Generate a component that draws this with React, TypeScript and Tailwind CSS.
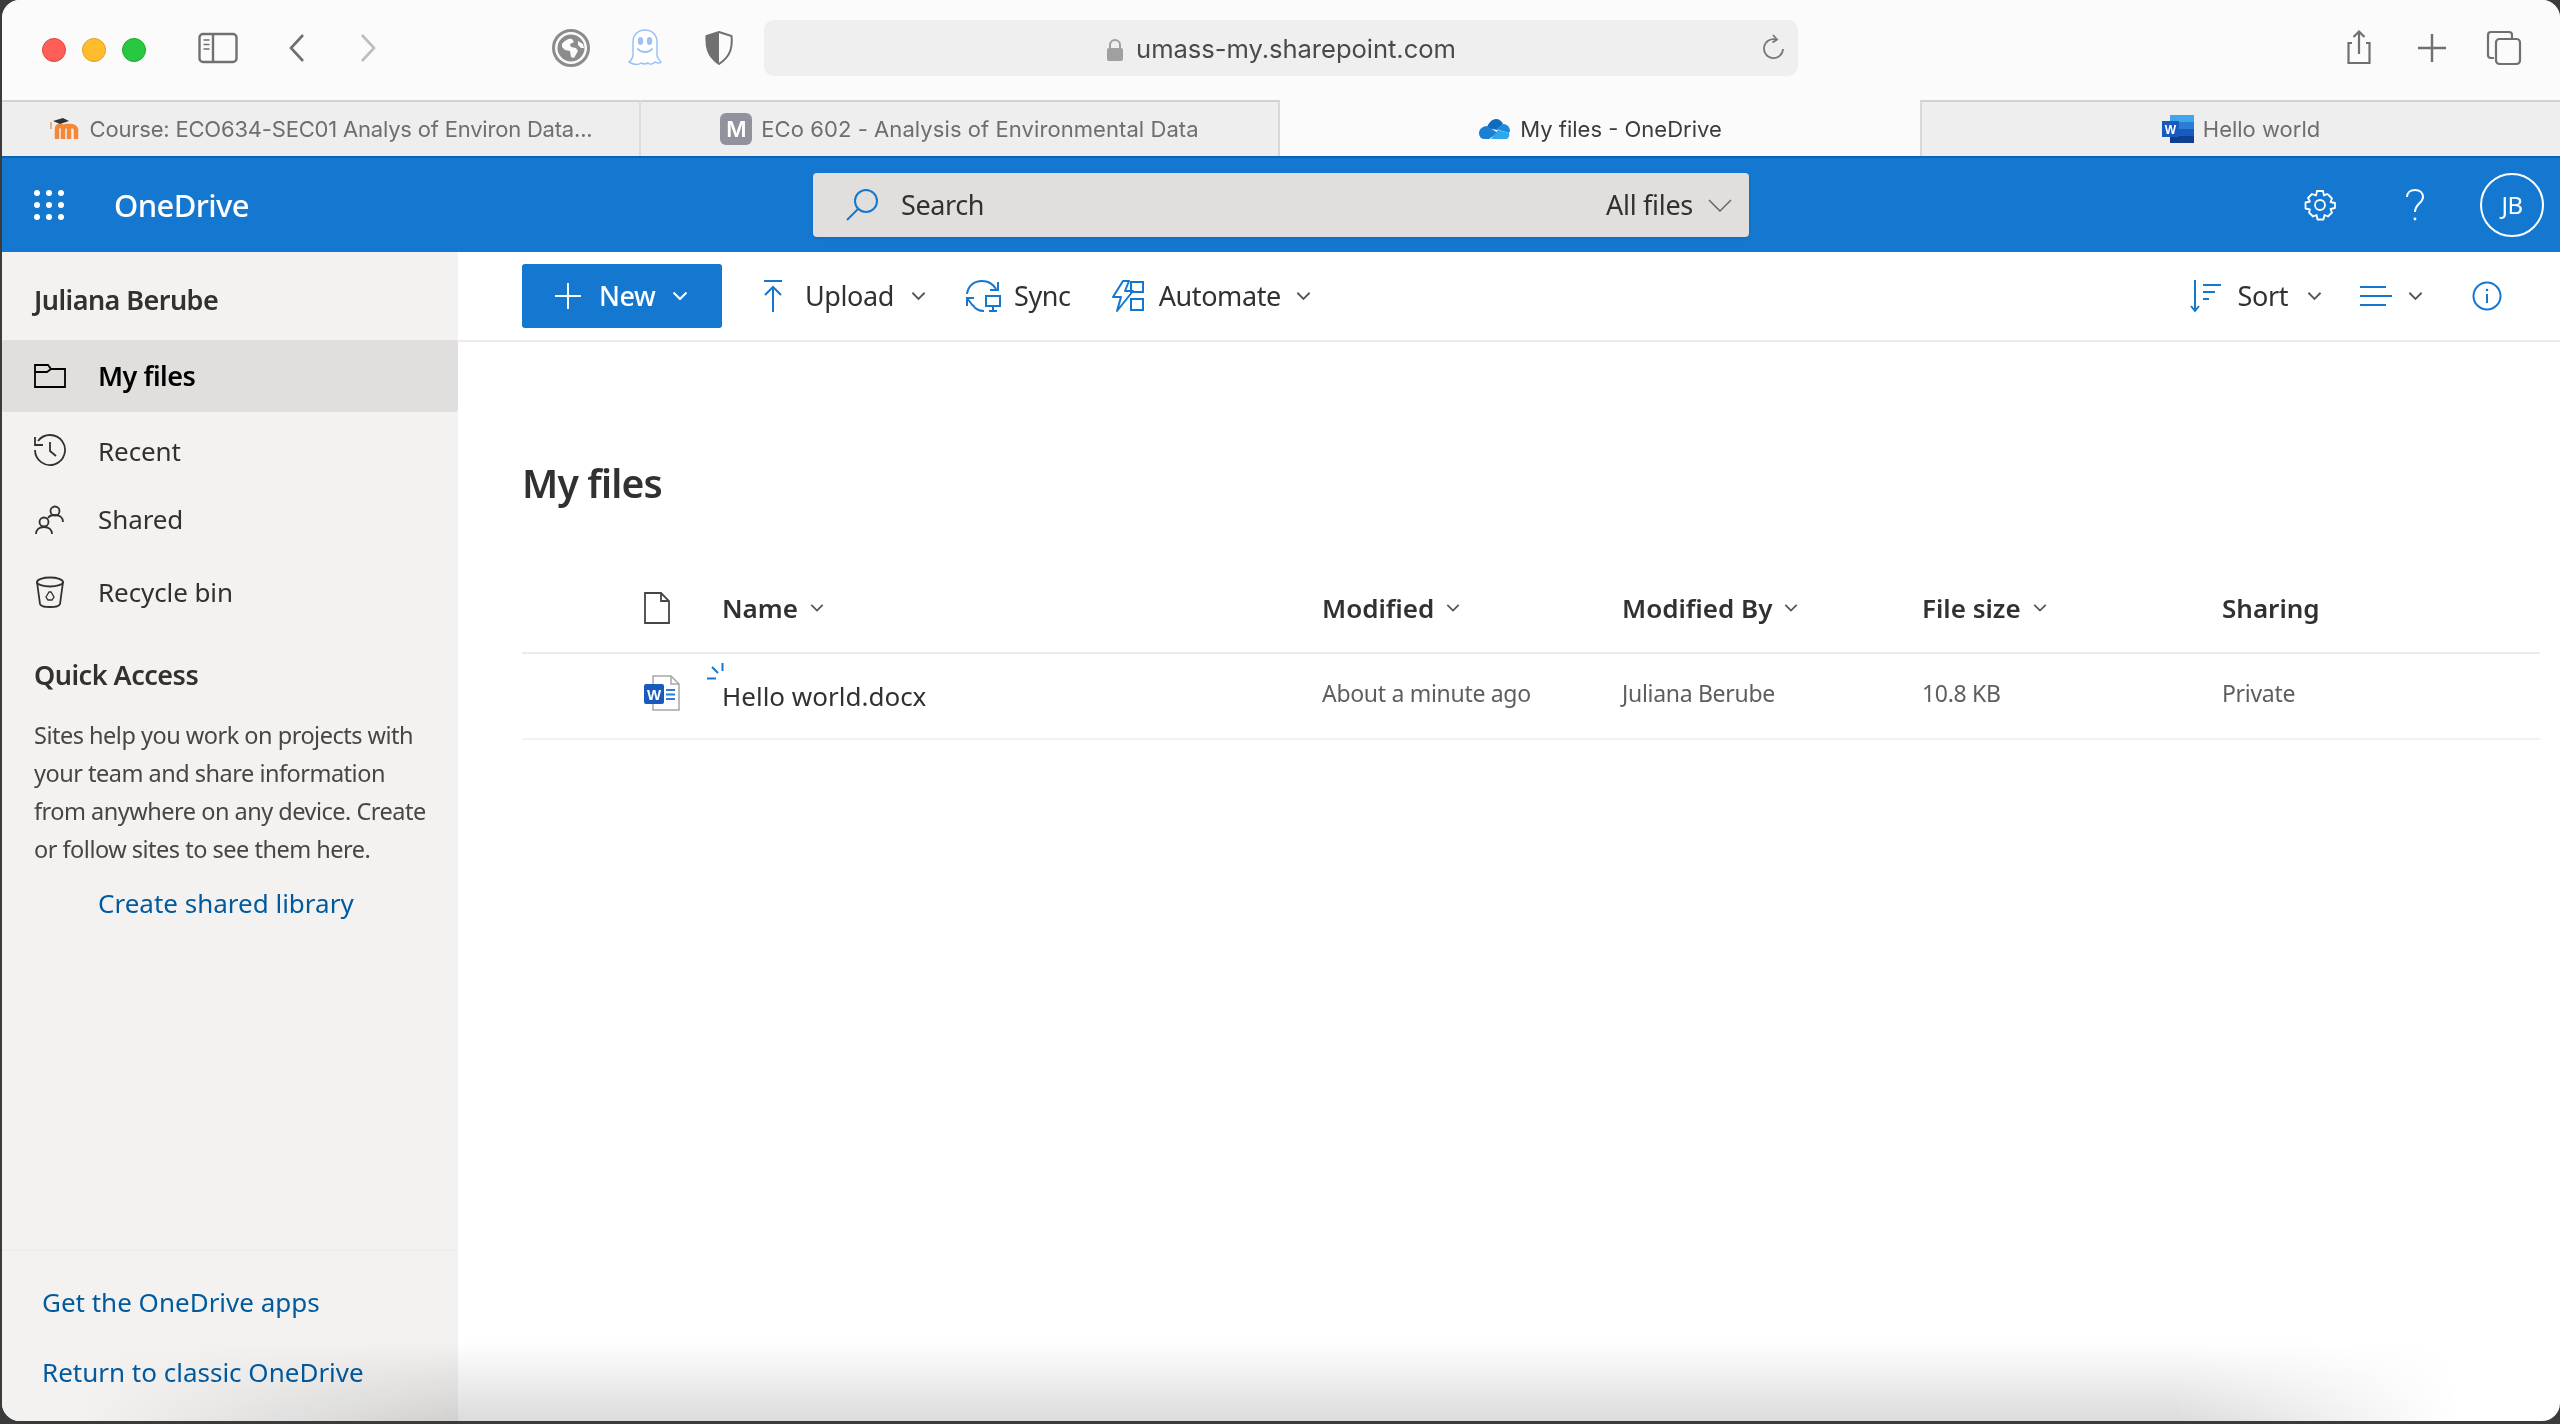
import type { ReactNode } from 'react';

const segoe = 'font-["Noto_Sans",sans-serif]';

function Chevron({ className = '' }: { className?: string }) {
  return (
    <svg viewBox="0 0 16 10" className={`w-[16px] h-[10px] ${className}`} fill="none" stroke="currentColor" strokeWidth="2">
      <path d="M1.5 1.5 8 8l6.5-6.5" />
    </svg>
  );
}

function SidebarToggle() {
  return (
    <svg viewBox="0 0 40 32" className="w-[40px] h-[32px] text-[#707070]" fill="none" stroke="currentColor" strokeWidth="2.4">
      <rect x="1.5" y="2" width="37" height="28" rx="3.5" />
      <path d="M15 2v28" />
      <path d="M5.5 8h6M5.5 12.5h6M5.5 17h6" strokeWidth="1.6" />
    </svg>
  );
}

function Globe() {
  return (
    <svg viewBox="0 0 38 38" className="w-[38px] h-[38px]">
      <circle cx="19" cy="19" r="17.5" fill="none" stroke="#8c8c8c" strokeWidth="3" />
      <circle cx="19" cy="19" r="13.5" fill="#8c8c8c" />
      <path d="M10 15c3-4 7-6 10-5l2 3-4 2 1 3 5 1 2 3-4 7-3-1-1-6-5-1-3-3zM26 12l5 3 1 4-3 0-3-3z" fill="#fbfbfb" />
    </svg>
  );
}

function Ghost() {
  return (
    <svg viewBox="0 0 34 38" className="w-[34px] h-[38px]">
      <path d="M5 27V13C5 6 10 1 17 1s12 5 12 12v14c1 3 3 5 4 6-2 2-4 1-6 0-2 2-5 3-7 1-2 1-5 1-7 0-3 2-7 2-12-1 2-1 3-3 4-6z" fill="#fff" stroke="#9cc2f5" strokeWidth="1.5" />
      <ellipse cx="12.5" cy="12" rx="2.7" ry="4" fill="#9cc2f5" />
      <ellipse cx="21.5" cy="12" rx="2.7" ry="4" fill="#9cc2f5" />
      <path d="M10 20c3 4 11 4 14 0" fill="none" stroke="#9cc2f5" strokeWidth="2" strokeLinecap="round" />
    </svg>
  );
}

function Shield() {
  return (
    <svg viewBox="0 0 28 34" className="w-[28px] h-[34px]">
      <path d="M14 1 26.5 5c1 10 0 20-12.500 28C2 25 1 15 1.500 5z" fill="#fbfbfb" stroke="#707070" strokeWidth="2" />
      <path d="M14 1 1.500 5C1 15 2 25 14 33z" fill="#707070" />
    </svg>
  );
}

function Moodle() {
  return (
    <svg viewBox="0 0 32 24" className="w-[32px] h-[24px]">
      <path d="M8 22V12c0-2 1-3 3-3s3 1 3 3v10M14 12c0-2 2-3 4-3h4c3 0 5 2 5 4v9M20 10v12" fill="none" stroke="#f4883a" strokeWidth="4.500" />
      <path d="M4 4l10-3 6 3-9 3z" fill="#333" />
      <path d="M2 5v7" stroke="#e8b08a" strokeWidth="2" />
    </svg>
  );
}

function CloudIcon() {
  return (
    <svg viewBox="0 0 33 22" className="w-[33px] h-[22px]">
      <path d="M9 10c1-5 5-9 9-9 3 0 6 2 7 5l-6 6z" fill="#0f6cbd" />
      <path d="M25 6c4 0 7 3 7 7l-1 2-13-4z" fill="#1a8ce0" />
      <path d="M9 8 20 15l-9 6H6c-3 0-5-3-5-6 0-4 4-7 8-7z" fill="#1a80d4" />
      <path d="M13 21l7-9 11 3c1 4-1 6-4 6z" fill="#2ea8ec" />
    </svg>
  );
}

function WordTab() {
  return (
    <svg viewBox="0 0 32 28" className="w-[32px] h-[28px]">
      <rect x="8" y="0" width="24" height="7" fill="#41a5ee" />
      <rect x="8" y="7" width="24" height="7" fill="#2b7cd3" />
      <rect x="8" y="14" width="24" height="7" fill="#185abd" />
      <rect x="8" y="21" width="24" height="7" fill="#103f91" />
      <rect x="0" y="6" width="17" height="16" fill="#185abd" />
      <text x="8.500" y="18.500" textAnchor="middle" fontSize="12" fontWeight="700" fill="#fff" fontFamily="Liberation Sans">W</text>
    </svg>
  );
}

function WordFile() {
  return (
    <svg viewBox="0 0 36 36" className="w-[36px] h-[36px]">
      <path d="M9 1h18l8 8v26H9z" fill="#fff" stroke="#a6a6a6" strokeWidth="1.500" />
      <path d="M27 1v8h8" fill="none" stroke="#a6a6a6" strokeWidth="1.500" />
      <path d="M22 15h9M22 19.500h9M22 24h9" stroke="#2b7cd3" strokeWidth="1.800" />
      <rect x="0" y="9" width="20" height="20" rx="2" fill="#185abd" />
      <text x="10" y="24.500" textAnchor="middle" fontSize="15" fontWeight="700" fill="#fff" fontFamily="Liberation Sans">W</text>
    </svg>
  );
}

function TopIcon({ children, className }: { children: ReactNode; className: string }) {
  return (
    <svg viewBox="0 0 36 36" className={className} fill="none" stroke="currentColor" strokeWidth="1.800">
      {children}
    </svg>
  );
}

function NavItem({ icon, label, className }: { icon: ReactNode; label: string; className: string }) {
  return (
    <div className={`flex items-center pl-[32px] text-[#323130] ${className}`}>
      <div className="w-[32px] h-[32px] flex items-center justify-center">{icon}</div>
      <span className="ml-[32px] text-[26px] tracking-[-0.1px]">{label}</span>
    </div>
  );
}

function Tab({ icon, label, active, className = '' }: { icon: ReactNode; label: string; active?: boolean; className?: string }) {
  return (
    <div className={`flex-1 flex items-center justify-center gap-[9px] text-[22px] border-t-2 ${active ? 'bg-[#fbfbfb] text-[#3c3c3c] border-transparent' : 'bg-[#eeeeee] text-[#6e6e6e] border-[#d2d2d2]'} ${className}`}>
      {icon}
      <span className="whitespace-nowrap">{label}</span>
    </div>
  );
}

function ColHeader({ label, chevron = true }: { label: string; chevron?: boolean }) {
  return (
    <div className="flex items-center gap-[12px] text-[26px] font-semibold text-[#323130] tracking-[0px]">
      <span>{label}</span>
      {chevron && <Chevron className="text-[#555] !w-[14px]" />}
    </div>
  );
}

export default function App() {
  return (
    <div className="relative w-[2560px] h-[1424px] bg-[#3b3b3b] overflow-hidden">
      <div className={`relative ml-[2px] w-[2558px] h-[1421px] bg-white rounded-[18px] overflow-hidden flex flex-col ${segoe}`}>
        {/* safari toolbar */}
        <div className="h-[100px] shrink-0 bg-[#fbfbfb] flex items-center font-['Inter',sans-serif]">
          <div className="flex items-center gap-[16px] ml-[40px]">
            <div className="w-[24px] h-[24px] rounded-full bg-[#ff5f57] border border-[#e0443e]" />
            <div className="w-[24px] h-[24px] rounded-full bg-[#febc2e] border border-[#dea123]" />
            <div className="w-[24px] h-[24px] rounded-full bg-[#28c840] border border-[#1aab29]" />
          </div>
          <div className="ml-[52px] -mt-[4px]">
            <SidebarToggle />
          </div>
          <svg viewBox="0 0 20 30" className="ml-[49px] w-[20px] h-[30px] -mt-[4px] text-[#6e6e6e]" fill="none" stroke="currentColor" strokeWidth="2.600">
            <path d="M16 2 4 15l12 13" />
          </svg>
          <svg viewBox="0 0 20 30" className="ml-[51px] w-[20px] h-[30px] -mt-[4px] text-[#bdbdbd]" fill="none" stroke="currentColor" strokeWidth="2.600">
            <path d="M4 2l12 13L4 28" />
          </svg>
          <div className="ml-[174px] -mt-[4px]">
            <Globe />
          </div>
          <div className="ml-[38px] -mt-[4px]">
            <Ghost />
          </div>
          <div className="ml-[43px] -mt-[4px]">
            <Shield />
          </div>
          <div className="relative ml-[31px] w-[1034px] h-[56px] -mt-[4px] pt-[3px] rounded-[10px] bg-[#efefef] flex items-center justify-center gap-[12px]">
            <svg viewBox="0 0 18 24" className="w-[18px] h-[24px]">
              <path d="M4 11V7a5 5 0 0 1 10 0v4" fill="none" stroke="#a0a0a0" strokeWidth="2" />
              <rect x="1" y="10" width="16" height="13" rx="2" fill="#a0a0a0" />
            </svg>
            <span className="text-[25.600px] text-[#4a4a4a] tracking-[-0.05px]">umass-my.sharepoint.com</span>
            <svg viewBox="0 0 24 28" className="absolute right-[12px] top-[14px] w-[24px] h-[28px] text-[#777]" fill="none" stroke="currentColor" strokeWidth="1.800">
              <path d="M14 5.500A9.500 9.500 0 1 0 21 15M11 1l4 4.500-4.500 3" />
            </svg>
          </div>
          <TopIcon className="ml-[543px] w-[36px] h-[40px] -mt-[4px] text-[#707070]">
            <path d="M11 13H7.500v20h21V13H25M18 24V2M12.500 7 18 1.500 23.500 7" strokeWidth="2.200" />
          </TopIcon>
          <TopIcon className="ml-[37px] w-[36px] h-[36px] -mt-[4px] text-[#707070]">
            <path d="M18 4v28M4 18h28" strokeWidth="2.400" />
          </TopIcon>
          <TopIcon className="ml-[36px] w-[36px] h-[36px] -mt-[4px] text-[#707070]">
            <path d="M8 28H5a3 3 0 0 1-3-3V5a3 3 0 0 1 3-3h18a3 3 0 0 1 3 3v4" strokeWidth="2.200" />
            <rect x="10" y="9" width="24" height="25" rx="3.500" strokeWidth="2.200" />
          </TopIcon>
        </div>

        {/* tabs */}
        <div className="h-[56px] shrink-0 flex font-['Inter',sans-serif]">
          <Tab
            icon={<Moodle />}
            label="Course: ECO634-SEC01 Analys of Environ Data..."
            className="w-[639px] flex-none border-r-2 border-r-[#dddddd] tracking-[-0.2px]"
          />
          <Tab
            icon={
              <div className="w-[32px] h-[32px] rounded-[6px] bg-[#90929c] text-white text-[22px] font-semibold flex items-center justify-center">
                M
              </div>
            }
            label="ECo 602 - Analysis of Environmental Data"
            className="w-[639px] flex-none border-r-2 border-r-[#d8d8d8] tracking-[0.07px]"
          />
          <Tab icon={<CloudIcon />} label="My files - OneDrive" active className="w-[640px] flex-none" />
          <Tab icon={<WordTab />} label="Hello world" className="border-l-2 border-l-[#d8d8d8]" />
        </div>

        {/* onedrive suite bar */}
        <div className="h-[96px] shrink-0 bg-[#1478d0] border-t-2 border-[#0a62b4] flex items-center text-white">
          <div className="ml-[32px] w-[30px] grid grid-cols-3 gap-[6.500px]">
            {Array.from({ length: 9 }, (_, i) => (
              <div key={i} className="w-[5.500px] h-[5.500px] rounded-full bg-white" />
            ))}
          </div>
          <span className="ml-[50px] text-[31px] font-medium tracking-[-0.6px] w-[138px]">OneDrive</span>
          <div className="ml-[561px] w-[936px] h-[64px] rounded-[4px] bg-[#e1dfdd] shadow-sm flex items-center text-[#323130] text-[27px]">
            <svg viewBox="0 0 34 34" className="ml-[32px] w-[34px] h-[34px] text-[#1478d0]" fill="none" stroke="currentColor" strokeWidth="2">
              <circle cx="21" cy="13" r="11" />
              <path d="M13 21 2 32" />
            </svg>
            <span className="ml-[22px] tracking-[-0.4px]">Search</span>
            <span className="ml-auto tracking-[-0.3px]">All files</span>
            <svg viewBox="0 0 24 13" className="ml-[15px] mr-[17px] w-[24px] h-[13px] text-[#605e5c]" fill="none" stroke="currentColor" strokeWidth="1.400">
              <path d="M1 1l11 11L23 1" />
            </svg>
          </div>
          <svg viewBox="0 0 32 32" className="ml-[555px] w-[32px] h-[32px]" fill="none" stroke="currentColor" strokeWidth="1.800">
            <circle cx="16" cy="16" r="5" />
            <path d="M13 2h6l1 4.500 3-1.500 1 .500 4 4-1.500 3.500 4.500 1v5l-4.500 1 1.500 3.500-4 4-3.500-1.500-1 4.500h-6l-1-4.500-3.500 1.500-4-4L6 20.500 1.500 19.500v-6L6 12.500 4 9l4-4 4 1.500z" strokeLinejoin="round" />
          </svg>
          <svg viewBox="0 0 20 32" className="ml-[69px] w-[20px] h-[32px]" fill="none" stroke="currentColor" strokeWidth="2">
            <path d="M2 8c0-4 3-7 8-7s8 3 8 7c0 6-8 7-8 15" />
            <circle cx="10" cy="30" r="1.400" fill="currentColor" stroke="none" />
          </svg>
          <div className="ml-[55px] w-[64px] h-[64px] rounded-full border-2 border-white flex items-center justify-center text-[24px] tracking-[-0.5px]">
            JB
          </div>
        </div>

        <div className="flex-1 flex min-h-0">
          {/* left nav */}
          <div className="w-[456px] shrink-0 bg-[#f3f2f1] flex flex-col">
            <div className="h-[88px] pl-[32px] pt-[30px] text-[27px] font-semibold text-[#323130] tracking-[-0.55px] leading-[36px]">
              Juliana Berube
            </div>
            <div className="h-[72px] rounded-[3px] bg-[#e1dfdd] flex items-center pl-[32px] text-black">
              <svg viewBox="0 0 32 24" className="w-[32px] h-[24px]" fill="none" stroke="currentColor" strokeWidth="1.800">
                <path d="M1 23V1h13l3 4h14v18z" />
                <path d="M1 8h12l4-3" />
              </svg>
              <span className="ml-[32px] text-[27px] font-semibold tracking-[-0.5px]">My files</span>
            </div>
            <NavItem
              className="h-[72px] mt-[3px]"
              label="Recent"
              icon={
                <svg viewBox="0 0 32 32" className="w-[32px] h-[32px] -mt-[3px]" fill="none" stroke="currentColor" strokeWidth="1.800">
                  <path d="M4 7A15 15 0 1 1 1 16" />
                  <path d="M1 3v8h8M16 8v9l6 5" />
                </svg>
              }
            />
            <NavItem
              className="h-[65px]"
              label="Shared"
              icon={
                <svg viewBox="0 0 30 30" className="w-[30px] h-[30px]" fill="none" stroke="currentColor" strokeWidth="1.800">
                  <circle cx="20" cy="6" r="4.500" />
                  <circle cx="9" cy="17" r="4.500" />
                  <path d="M1 29c0-4 3-7 8-7s8 3 8 7M13 13c1-2 4-3 7-3 5 0 8 3 8 7" />
                </svg>
              }
            />
            <NavItem
              className="h-[80px]"
              label="Recycle bin"
              icon={
                <svg viewBox="0 0 28 32" className="w-[28px] h-[32px]" fill="none" stroke="currentColor" strokeWidth="1.800">
                  <ellipse cx="14" cy="6" rx="13" ry="4.500" />
                  <path d="M1 6l3 22c1 3 5 3 10 3s9 0 10-3l3-22" />
                  <path d="M10 21l3-5 2 0 3 5-2 3h-4zM12 24l-2-3" strokeWidth="1.300" />
                </svg>
              }
            />
            <div className="pl-[32px] mt-[25px] text-[27px] font-semibold text-[#323130] tracking-[-0.5px] leading-[36px]">
              Quick Access
            </div>
            <p className="pl-[32px] mt-[23px] w-[437px] text-[23.500px] leading-[38px] text-[#484644] tracking-[-0.5px]">
              Sites help you work on projects with your team and share information from anywhere on any device. Create or follow sites to see them here.
            </p>
            <div className="pl-[96px] mt-[17px] text-[26px] leading-[36px] text-[#005a9e]">
              Create shared library
            </div>
            <div className="mt-auto h-[172px] border-t-2 border-[#eeedec] pl-[40px] text-[26px] text-[#005a9e]">
              <div className="mt-[33px] leading-[36px]">Get the OneDrive apps</div>
              <div className="mt-[34px] leading-[36px]">Return to classic OneDrive</div>
            </div>
          </div>

          {/* main */}
          <div className="flex-1 flex flex-col min-w-0">
            <div className="h-[90px] shrink-0 border-b-2 border-[#edebe9] flex items-center pl-[64px] text-[27px] text-[#323130] tracking-[-0.4px]">
              <div className="w-[200px] h-[64px] rounded-[3px] bg-[#1478d0] text-white flex items-center">
                <svg viewBox="0 0 28 28" className="ml-[32px] w-[28px] h-[28px]" fill="none" stroke="currentColor" strokeWidth="2">
                  <path d="M14 1v26M1 14h26" />
                </svg>
                <span className="ml-[17px] font-medium">New</span>
                <Chevron className="ml-[16px] !w-[16px]" />
              </div>
              <svg viewBox="0 0 20 34" className="ml-[41px] w-[20px] h-[34px] text-[#1478d0]" fill="none" stroke="currentColor" strokeWidth="2">
                <path d="M1 2h18M10 33V8M2 16l8-8 8 8" />
              </svg>
              <span className="ml-[22px]">Upload</span>
              <Chevron className="ml-[17px] !w-[15px] text-[#555]" />
              <svg viewBox="0 0 36 34" className="ml-[39px] w-[36px] h-[34px] text-[#1478d0]" fill="none" stroke="currentColor" strokeWidth="2">
                <path d="M2 15C3 7 9 2 17 2c6 0 11 3 14 8M33 3v8h-8M2 19l6 8M2 27v-8h7M8 26c2 4 6 6 11 6" />
                <rect x="21" y="17" width="14" height="10" />
                <path d="M28 27v5M24 32h8" />
              </svg>
              <span className="ml-[13px]">Sync</span>
              <svg viewBox="0 0 34 32" className="ml-[39px] w-[34px] h-[32px] text-[#1478d0]" fill="none" stroke="currentColor" strokeWidth="2">
                <path d="M13 1 3 17h8l-4 14 16-20h-8l4-10z" strokeLinejoin="round" />
                <rect x="21" y="2" width="12" height="10" />
                <rect x="21" y="19" width="12" height="11" />
              </svg>
              <span className="ml-[15px]">Automate</span>
              <Chevron className="ml-[15px] !w-[15px] text-[#555]" />
              <div className="ml-auto flex items-center">
                <svg viewBox="0 0 32 34" className="w-[32px] h-[34px] text-[#1478d0]" fill="none" stroke="currentColor" strokeWidth="2">
                  <path d="M5 1v31M1 27l4 5 4-5M13 6h18M13 13h12M13 20h6" />
                </svg>
                <span className="ml-[16px]">Sort</span>
                <Chevron className="ml-[19px] !w-[15px] text-[#555]" />
                <svg viewBox="0 0 32 22" className="ml-[38px] w-[32px] h-[22px] text-[#1478d0]" fill="none" stroke="currentColor" strokeWidth="2">
                  <path d="M0 2h26M0 11h32M0 20h26" />
                </svg>
                <Chevron className="ml-[16px] !w-[15px] text-[#555]" />
                <svg viewBox="0 0 30 30" className="ml-[49px] mr-[58px] w-[30px] h-[30px] text-[#1478d0]" fill="none" stroke="currentColor" strokeWidth="2">
                  <circle cx="15" cy="15" r="13.500" />
                  <path d="M15 13v9" />
                  <circle cx="15" cy="9" r="1.300" fill="currentColor" stroke="none" />
                </svg>
              </div>
            </div>

            <div className="pl-[64px] pr-[20px]">
              <h1 className="mt-[115px] text-[39px] leading-[52px] font-semibold text-[#323130] tracking-[-0.8px]">My files</h1>
              <div className="mt-[67px] h-[78px] border-b-2 border-[#edebe9] grid grid-cols-[122px_78px_600px_300px_300px_300px_1fr] items-center pb-[12px]">
                <div />
                <svg viewBox="0 0 26 32" className="w-[26px] h-[32px] text-[#484644]" fill="none" stroke="currentColor" strokeWidth="1.800">
                  <path d="M1 1h16l8 8v22H1zM17 1v8h8" />
                </svg>
                <ColHeader label="Name" />
                <ColHeader label="Modified" />
                <ColHeader label="Modified By" />
                <ColHeader label="File size" />
                <ColHeader label="Sharing" chevron={false} />
              </div>
              <div className="h-[86px] border-b-2 border-[#f3f2f1] grid grid-cols-[122px_78px_600px_300px_300px_300px_1fr] items-center text-[23px] text-[#605e5c] tracking-[-0.3px] pb-[6px]">
                <div />
                <WordFile />
                <div className="relative text-[26px] text-[#323130] mt-[6px] tracking-normal">
                  <svg viewBox="0 0 17 17" className="absolute -left-[15px] -top-[14px] w-[17px] h-[17px] text-[#1478d0]" fill="none" stroke="currentColor" strokeWidth="2">
                    <path d="M15.500 0v8M0 15.500h9M5 4l6 6" />
                  </svg>
                  Hello world.docx
                </div>
                <div>About a minute ago</div>
                <div>Juliana Berube</div>
                <div>10.8 KB</div>
                <div>Private</div>
              </div>
            </div>
          </div>
        </div>

        {/* soft window shadow at the bottom edge */}
        <div className="absolute left-0 right-0 bottom-0 h-[80px] pointer-events-none mix-blend-multiply bg-gradient-to-b from-white to-[#dcdcdc] [mask-image:linear-gradient(to_right,transparent_3%,black_18%,black_85%,transparent_96%)]" />
      </div>
    </div>
  );
}
